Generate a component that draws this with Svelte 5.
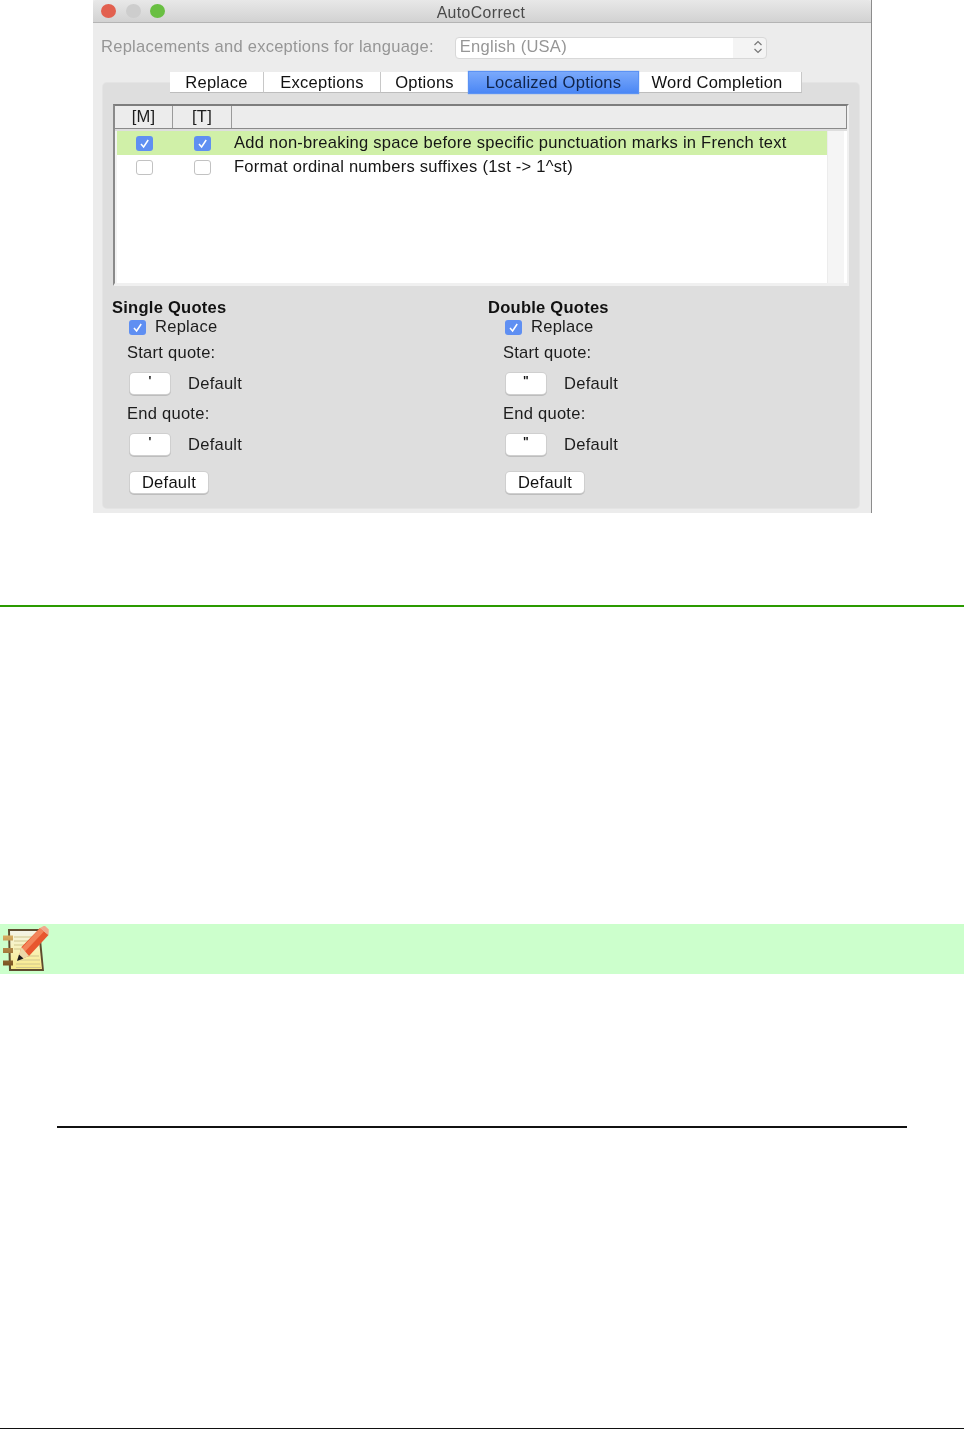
<script>
  const tabs = [
    { label: 'Replace', width: 94 },
    { label: 'Exceptions', width: 117 },
    { label: 'Options', width: 88 },
    { label: 'Localized Options', width: 169, active: true },
    { label: 'Word Completion', width: 164 }
  ];
  const options = [
    { text: 'Add non-breaking space before specific punctuation marks in French text', on: true },
    { text: 'Format ordinal numbers suffixes (1st -> 1^st)', on: false }
  ];
  const quotes = [
    { title: 'Single Quotes', mark: "'" },
    { title: 'Double Quotes', mark: '"' }
  ];
</script>

{#snippet check(on)}
  <span class="check" class:on>
    {#if on}
      <svg viewBox="0 0 17 15" width="17" height="15"><path d="M5 8l2.6 3L12.2 4" fill="none" stroke="#fff" stroke-width="1.5" /></svg>
    {/if}
  </span>
{/snippet}

<div class="page">
  <div class="window">
    <div class="titlebar">
      <span class="light red"></span>
      <span class="light grey"></span>
      <span class="light green"></span>
      <span class="title">AutoCorrect</span>
    </div>

    <div class="language">
      <span>Replacements and exceptions for language:</span>
      <div class="select">
        <span class="value">English (USA)</span>
        <svg viewBox="0 0 10 16" width="10" height="16"><path d="M1.5 6L5 2.5 8.5 6M1.5 10L5 13.5 8.5 10" fill="none" stroke="#777" stroke-width="1.2" /></svg>
      </div>
    </div>

    <div class="panel">
      <div class="tabs">
        {#each tabs as tab}
          <div class="tab" class:active={tab.active} style="width: {tab.width}px">{tab.label}</div>
        {/each}
      </div>

      <div class="table">
        <div class="thead">
          <div class="th m">[M]</div>
          <div class="th t">[T]</div>
          <div class="th"></div>
        </div>
        <div class="tbody">
          <div class="rows">
            {#each options as opt}
              <div class="row" class:hl={opt.on}>
                <div class="cell-m">{@render check(opt.on)}</div>
                <div class="cell-t">{@render check(opt.on)}</div>
                <div class="cell-text">{opt.text}</div>
              </div>
            {/each}
          </div>
          <div class="scroll"></div>
        </div>
      </div>

      <div class="quotes">
        {#each quotes as q}
          <div class="col">
            <div class="heading">{q.title}</div>
            <div class="replace">{@render check(true)}<span>Replace</span></div>
            <div class="lbl first">Start quote:</div>
            <div class="pick"><span class="btn small">{q.mark}</span><span>Default</span></div>
            <div class="lbl">End quote:</div>
            <div class="pick"><span class="btn small">{q.mark}</span><span>Default</span></div>
            <div class="btn reset">Default</div>
          </div>
        {/each}
      </div>
    </div>
  </div>

  <div class="green-rule"></div>

  <div class="note">
    <svg class="note-icon" viewBox="3 3 46 46" width="46" height="46">
      <defs>
        <linearGradient id="sheet" x1="0" y1="0" x2="0" y2="1">
          <stop offset="0" stop-color="#f4f3e6" />
          <stop offset="0.45" stop-color="#f8f2bc" />
          <stop offset="1" stop-color="#f8ea88" />
        </linearGradient>
        <linearGradient id="ring" x1="0" y1="0" x2="0" y2="1">
          <stop offset="0" stop-color="#d9ae62" />
          <stop offset="1" stop-color="#7a5220" />
        </linearGradient>
      </defs>
      <path d="M8 6H40L44 48H9Z" fill="#5e4c2e" />
      <path d="M10 8H38L42 46H11Z" fill="url(#sheet)" />
      <path d="M14 14H32M14 18H32M14 22H28M14 26H25M19 33H39M17 37H40M16 41H40M16 44.5H41" stroke="#cfc68e" stroke-width="1.2" fill="none" />
      <path d="M2.5 12.5H13V17.5H2.5ZM2 25H13V30H2ZM2 37.5H13V42.5H2Z" fill="url(#ring)" />
      <path d="M40 5L48.5 12 29 33 18 37 21.5 24Z" fill="#e8562e" />
      <path d="M40 5L44 8.5 25 28.5 22 25Z" fill="#f3845a" />
      <path d="M40 5L44.5 2.5 48.8 6.5 48.5 12Z" fill="#f0a98c" />
      <path d="M17 38L21.5 24 29 33Z" fill="#ecd7a8" />
      <path d="M17 38L19 31.5 23.5 35.5Z" fill="#1d1d1d" />
    </svg>
  </div>

  <div class="black-rule"></div>
  <div class="bottom-rule"></div>
</div>

<style>
  :global(body) {
    margin: 0;
    background: #fff;
  }

  .page {
    width: 964px;
    height: 1429px;
    display: flex;
    flex-direction: column;
    font-family: 'Liberation Sans', Arial, sans-serif;
    color: #1c1c1c;
    font-size: 16.55px;
    letter-spacing: 0.25px;
    overflow: hidden;
  }

  .window {
    width: 779px;
    height: 513px;
    margin-left: 93px;
    box-sizing: border-box;
    background: #ececec;
    border-right: 1px solid #8c8c8c;
    display: flex;
    flex-direction: column;
    filter: blur(0.35px);
    flex: none;
  }

  .titlebar {
    height: 23px;
    flex: none;
    box-sizing: border-box;
    display: flex;
    align-items: center;
    padding-left: 8px;
    gap: 9.5px;
    background: linear-gradient(#e8e8e8, #d2d2d2);
    border-bottom: 1px solid #b4b4b4;
    border-radius: 4px 4px 0 0;
    position: relative;
  }

  .light {
    width: 15px;
    height: 14px;
    border-radius: 50%;
  }
  .red { background: #e2604f; }
  .grey { background: #cdcdcd; }
  .green { background: #69bf42; }

  .title {
    position: absolute;
    left: 0;
    right: 2px;
    top: 4px;
    text-align: center;
    color: #4a4a4a;
    font-size: 15.8px;
    letter-spacing: 0.4px;
  }

  .language {
    display: flex;
    align-items: center;
    gap: 21px;
    height: 24px;
    margin-top: 12px;
    padding-left: 8px;
    color: #969696;
    flex: none;
  }

  .select {
    width: 312px;
    height: 22px;
    margin-top: 2px;
    box-sizing: border-box;
    background: linear-gradient(to right, #fff 0, #fff 277px, #f4f4f4 277px);
    border: 1px solid #d8d8d8;
    border-radius: 4px;
    display: flex;
    align-items: center;
    justify-content: space-between;
    padding: 0 3px 2px 4px;
  }

  .panel {
    margin: 24px 12px 0 10px;
    height: 425px;
    flex: none;
    background: #dedede;
    border-radius: 4px;
    box-sizing: border-box;
    padding: 0 10px;
    box-shadow: 0 0 0 1px #e4e4e4;
  }

  .tabs {
    display: flex;
    margin: -11px 0 0 57px;
    height: 21px;
    color: #111;
  }

  .tab {
    box-sizing: border-box;
    background: #fff;
    height: 21px;
    line-height: 21px;
    text-align: center;
    border-right: 1px solid #c8c8c8;
    border-bottom: 1px solid #bdbdbd;
    white-space: nowrap;
  }

  .tab:last-child {
    padding-right: 5px;
  }

  .tab.active {
    background: linear-gradient(#7aa9fb, #4b87f5);
    border: none;
    box-shadow: 0 0 1px 1px #5b92f4;
    color: #10244a;
    position: relative;
  }

  .table {
    margin-top: 11px;
    width: 736px;
    height: 182px;
    box-sizing: border-box;
    border-right: 2px solid #f0f0f0;
    border-bottom: 3px solid #f0f0f0;
    border-left: 2px solid #8a8a8a;
    border-top: 2px solid #7d7d7d;
    display: flex;
    flex-direction: column;
  }

  .thead {
    display: flex;
    height: 23px;
    flex: none;
    box-sizing: border-box;
    background: #ececec;
    border-bottom: 1px solid #8a8a8a;
    border-right: 1px solid #8a8a8a;
  }

  .th {
    flex: 1;
    text-align: center;
    line-height: 22px;
  }

  .th.m, .th.t {
    flex: none;
    box-sizing: border-box;
    border-right: 1px solid #9a9a9a;
  }
  .th.m { width: 58px; }
  .th.t { width: 59px; }

  .tbody {
    flex: 1;
    display: flex;
    background: #fff;
    margin-top: 2px;
    border-left: 2px solid #f3f3f3;
  }

  .rows {
    width: 710px;
    flex: none;
  }

  .scroll {
    width: 16px;
    background: #f5f5f5;
    border-left: 1px solid #ececec;
  }

  .row {
    display: flex;
    align-items: center;
    height: 24px;
    color: #161616;
  }
  .row.hl { background: #d0f0a8; }

  .cell-m {
    width: 57px;
    padding-left: 19px;
    box-sizing: border-box;
    display: flex;
  }
  .cell-t {
    width: 60px;
    padding-left: 20px;
    box-sizing: border-box;
    display: flex;
  }
  .cell-text {
    padding-bottom: 1px;
    white-space: nowrap;
  }

  .check {
    width: 17px;
    height: 15px;
    box-sizing: border-box;
    border: 1px solid #c2c2c2;
    border-radius: 3px;
    background: #fff;
    display: block;
    flex: none;
    position: relative;
  }
  .check.on {
    background: #5f8ff2;
    border: none;
  }

  .quotes {
    display: grid;
    grid-template-columns: 376px 1fr;
    margin: 13px 0 0 -1px;
    color: #1c1c1c;
  }

  .heading {
    font-weight: bold;
    height: 18px;
    line-height: 18px;
    color: #111;
  }

  .replace {
    display: flex;
    align-items: center;
    gap: 9px;
    height: 20px;
    margin-left: 17px;
  }

  .lbl {
    height: 20px;
    line-height: 20px;
    margin-left: 15px;
    margin-top: 9px;
  }
  .lbl.first {
    margin-top: 6px;
  }

  .pick {
    display: flex;
    align-items: center;
    gap: 18px;
    margin: 9px 0 0 18px;
    height: 23px;
  }

  .btn {
    box-sizing: border-box;
    background: #fff;
    border-radius: 4px;
    box-shadow: 0 0 0 1px #cfcfcf, 0 1px 0 1px #bdbdbd;
    color: #111;
    text-align: center;
  }

  .small {
    width: 40px;
    height: 21px;
    line-height: 17px;
    font-weight: bold;
    font-size: 12px;
  }

  .reset {
    width: 78px;
    height: 21px;
    line-height: 21px;
    margin: 16px 0 0 18px;
  }

  .green-rule {
    height: 2px;
    margin-top: 92px;
    background: #2a9a00;
    flex: none;
  }

  .note {
    height: 50px;
    margin-top: 317px;
    background: #ccffcc;
    display: flex;
    align-items: center;
    padding-left: 3px;
    flex: none;
  }

  .note-icon {
    filter: blur(0.4px);
  }

  .black-rule {
    height: 2px;
    margin: 152px 57px 0;
    background: #111;
    flex: none;
  }

  .bottom-rule {
    height: 1px;
    margin-top: 300px;
    background: #111;
    flex: none;
  }
</style>
